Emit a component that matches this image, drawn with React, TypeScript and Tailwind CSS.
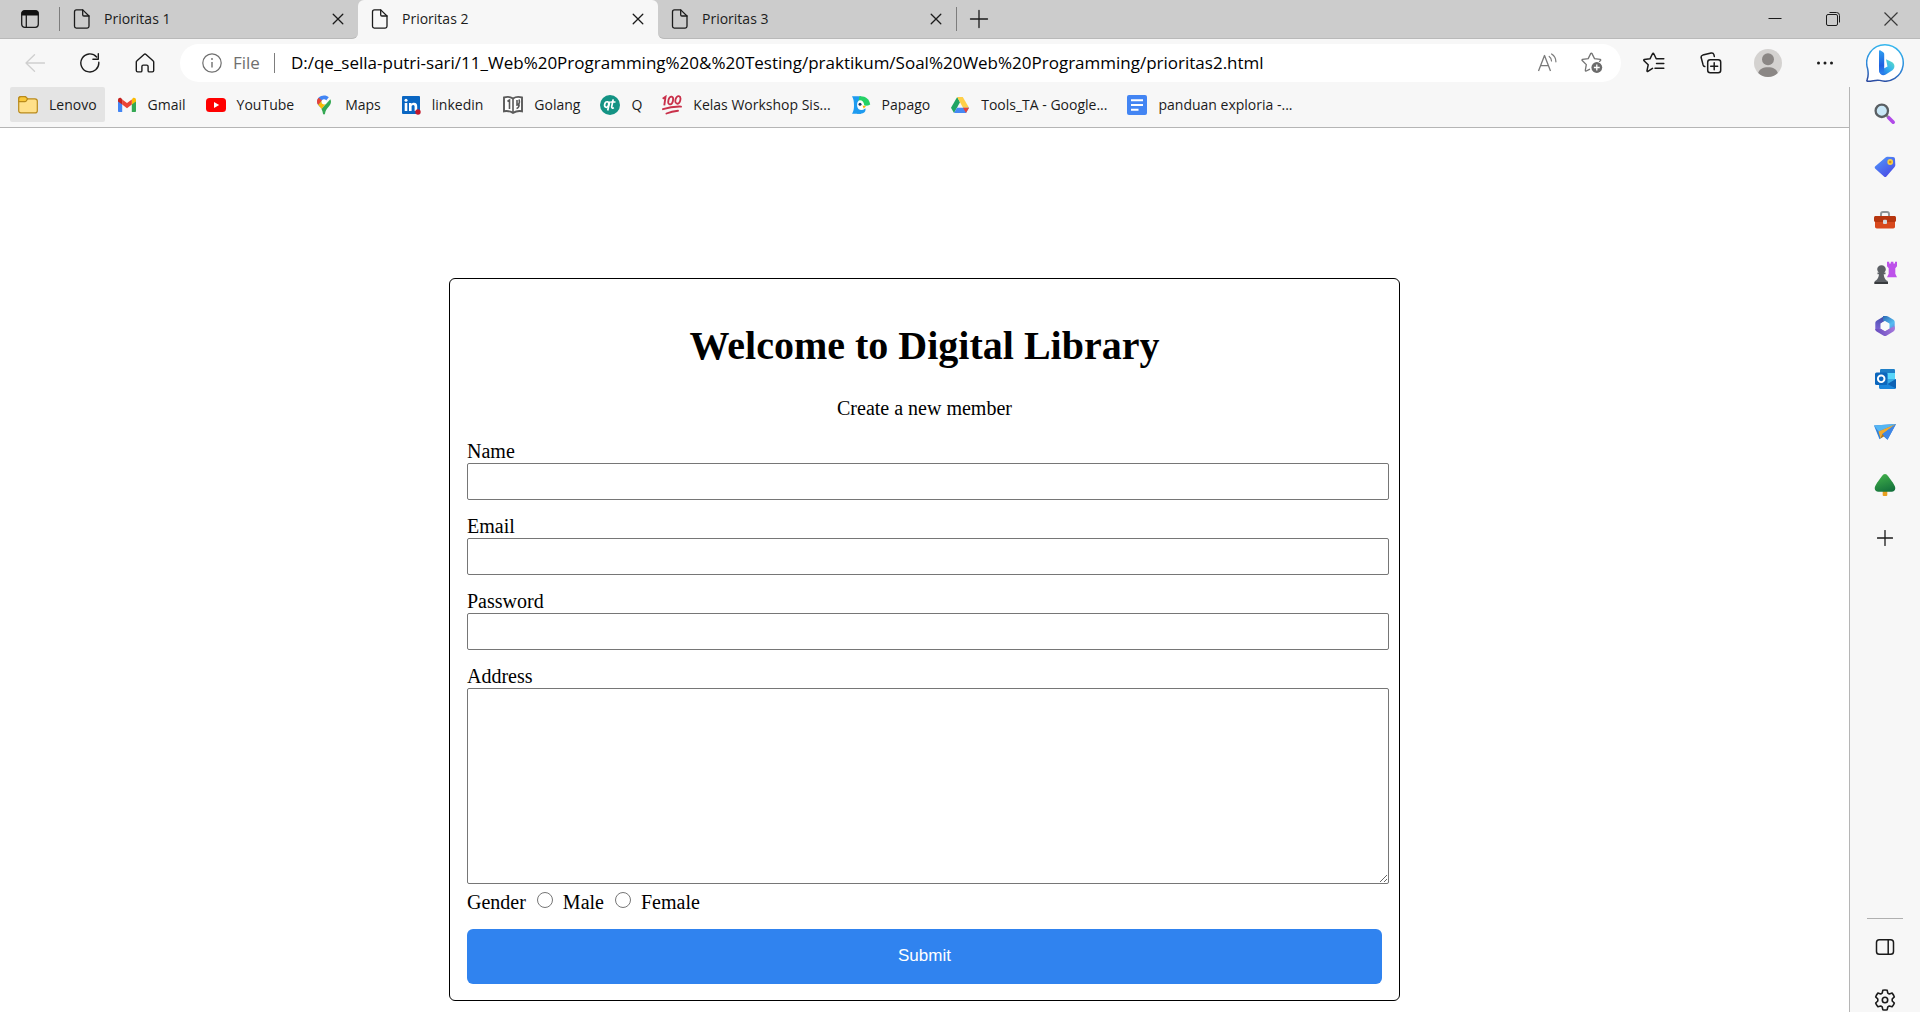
import type { ReactNode } from 'react';

type IconProps = { children: ReactNode; size?: string; box?: string };

function Icon({ children, size = 'size-5', box = '0 0 20 20' }: IconProps) {
  return (
    <svg viewBox={box} className={`${size} shrink-0`} fill="none" aria-hidden="true">
      {children}
    </svg>
  );
}

const line = { stroke: '#1b1b1b', strokeWidth: 1.3, strokeLinecap: 'round', strokeLinejoin: 'round' } as const;

/* ---------- window and toolbar icons ---------- */

const PageIcon = () => (
  <Icon>
    <path d="M4.5.9h6.2L17 7v10.3c0 1-.8 1.8-1.8 1.8H4.3c-1 0-1.8-.8-1.8-1.8V2.9c0-1.100.9-2 2-2Z" {...line} />
    <path d="M10.700 1v4.800c0 .8.500 1.200 1.200 1.200H17" {...line} />
  </Icon>
);

const CloseIcon = () => (
  <Icon size="size-3" box="0 0 12 12">
    <path d="m1.200 1.200 9.600 9.600m0-9.600-9.600 9.600" {...line} />
  </Icon>
);

const TabActionsIcon = () => (
  <Icon>
    <rect x="1.700" y="1.700" width="16.600" height="16.600" rx="3" {...line} />
    <path d="M1.500 6.500V4.500a3 3 0 0 1 3-3h11a3 3 0 0 1 3 3v2Z" fill="#111" />
    <path d="M6.300 6.500v11.800" {...line} />
  </Icon>
);

const PlusIcon = () => (
  <Icon>
    <path d="M10 1.500v17M1.500 10h17" {...line} />
  </Icon>
);

const BackIcon = () => (
  <Icon>
    <path d="M19.500 10H1m8.500-8.300L1 10l8.500 8.300" {...line} stroke="#cfcfcf" />
  </Icon>
);

const RefreshIcon = () => (
  <Icon>
    <path d="M18.800 9.200A9 9 0 1 1 16.600 4M18.300.8v5.400h-5.400" {...line} strokeWidth={1.400} />
  </Icon>
);

const HomeIcon = () => (
  <Icon>
    <path d="M9 1.500 2 7.700c-.5.400-.7.800-.7 1.400v8.400c0 .8.600 1.400 1.400 1.400h3c.7 0 1.200-.5 1.200-1.200v-4.200c0-.8.600-1.400 1.400-1.400h3.400c.8 0 1.400.6 1.400 1.400v4.200c0 .7.500 1.200 1.200 1.200h3c.8 0 1.400-.6 1.400-1.400V9.100c0-.6-.2-1-.7-1.400L11 1.500a1.500 1.500 0 0 0-2 0Z" {...line} strokeWidth={1.400} />
  </Icon>
);

const InfoIcon = () => (
  <Icon>
    <circle cx="10" cy="10" r="9.200" stroke="#6f6f6f" strokeWidth="1.200" />
    <path d="M10 9v5.500" stroke="#6f6f6f" strokeWidth="1.400" />
    <circle cx="10" cy="6" r=".9" fill="#6f6f6f" />
  </Icon>
);

const ReadAloudIcon = () => (
  <Icon>
    <path d="m1.500 18 6-15.500 6 15.500M3.700 12.700h7.600" stroke="#7a7a7a" strokeWidth="1.300" strokeLinejoin="round" />
    <path d="M12.200 3.400c1.500 1 2.300 2.700 2.300 4.600M14.600 1c2.800 1.800 4.300 4.600 4.300 7.800" stroke="#7a7a7a" strokeWidth="1.200" strokeLinecap="round" />
  </Icon>
);

const StarAddIcon = () => (
  <Icon size="size-[22px]" box="0 0 22 22">
    <path d="M8.500 17.300 5.200 19c-.5.300-1-.1-.9-.6l1-5.800L1.200 8.500c-.4-.4-.2-1 .3-1.100l5.700-.8 2.600-5.200c.2-.5.900-.5 1.100 0l2.600 5.200 5.700.8c.6.100.7.700.3 1.100l-1 .9" stroke="#747474" strokeWidth="1.300" strokeLinecap="round" />
    <circle cx="15.800" cy="15.500" r="5.400" fill="#6b6b6b" />
    <path d="M15.800 12.600v5.800m-2.900-2.900h5.800" stroke="#fff" strokeWidth="1.300" />
  </Icon>
);

const FavoritesIcon = () => (
  <Icon size="size-[22px]" box="0 0 22 22">
    <path d="m9.500 16.400-4.600 2.900c-.5.300-1-.1-.9-.6l1.200-5.900L1 8.700c-.4-.4-.2-1 .3-1.100L7 6.800l2.600-5.300c.2-.5.900-.5 1.100 0l2.500 5.200h7.600M13.500 11.500h7.300M12 16.300h8.800" {...line} strokeWidth={1.500} />
  </Icon>
);

const CollectionsIcon = () => (
  <Icon size="size-[22px]" box="0 0 22 22">
    <rect x="7.700" y="7.700" width="13" height="13" rx="2.500" {...line} strokeWidth={1.500} />
    <path d="M14.200 10.700v7m-3.500-3.500h7M4.800 14.500c-.9-.2-1.400-.7-1.700-1.600L1.200 5.800c-.3-1.300.3-2.300 1.600-2.700l8.300-2.100c1.400-.3 2.400.3 2.800 1.600l.4 1.800" {...line} strokeWidth={1.500} />
  </Icon>
);

const ProfileIcon = () => (
  <Icon size="size-7" box="0 0 28 28">
    <circle cx="14" cy="14" r="14" fill="#d4d2d0" />
    <circle cx="14" cy="10.300" r="6" fill="#8b8785" />
    <path d="M4.200 24c1-3.700 4.700-5.700 9.800-5.700s8.800 2 9.800 5.700A14 14 0 0 1 14 28a14 14 0 0 1-9.800-4Z" fill="#8b8785" />
  </Icon>
);

const DotsIcon = () => (
  <Icon>
    <circle cx="3.500" cy="10" r="1.500" fill="#1b1b1b" />
    <circle cx="10" cy="10" r="1.500" fill="#1b1b1b" />
    <circle cx="16.500" cy="10" r="1.500" fill="#1b1b1b" />
  </Icon>
);

const BingIcon = () => (
  <Icon size="size-[38px]" box="0 0 38 38">
    <defs>
      <linearGradient id="bubble" x1="19" y1="0" x2="12" y2="38" gradientUnits="userSpaceOnUse">
        <stop stopColor="#35b8ee" />
        <stop offset=".6" stopColor="#2f86d8" />
        <stop offset="1" stopColor="#2b4aa0" />
      </linearGradient>
      <linearGradient id="stem" x1="14" y1="7" x2="18" y2="31" gradientUnits="userSpaceOnUse">
        <stop stopColor="#2f9df0" />
        <stop offset=".6" stopColor="#1f5fe0" />
        <stop offset="1" stopColor="#2f8cf0" />
      </linearGradient>
      <linearGradient id="bowl" x1="28" y1="16" x2="15" y2="30" gradientUnits="userSpaceOnUse">
        <stop stopColor="#5fe0c0" />
        <stop offset=".5" stopColor="#36b4ee" />
        <stop offset="1" stopColor="#2370e6" />
      </linearGradient>
    </defs>
    <path d="M19 .8a18.200 18.200 0 1 1-5.300 35.600c-3.500-1-8 1.200-12.400.8-.7-.1-.5-.7-.3-1.100 1-2.500 1.600-7 .6-11.500A18.200 18.200 0 0 1 19 .8Z" fill="#fff" stroke="url(#bubble)" strokeWidth="1.500" />
    <path d="m20 15.300 5.800 2.800c3.200 1.700 3.600 6 .6 8.200l-6.600 4.200c-3 1.800-6.300 0-6.500-3.500l8.200-4.600Z" fill="url(#bowl)" />
    <path d="M13 7.200c0-.8.800-1.200 1.500-.8l2.400 1.500c.9.600 1.300 1.300 1.300 2.300v14c0 2.800-.2 4.500-1.600 5.300-1.800.8-3.600-.7-3.600-3Z" fill="url(#stem)" />
  </Icon>
);

/* ---------- bookmark icons ---------- */

const FolderIcon = () => (
  <Icon>
    <path d="M.7 4c0-1.300.8-2.300 2.200-2.300h3.700c.8 0 1.300.3 1.800.9l1 1.200h7.500c1.500 0 2.400 1 2.400 2.300v9.600c0 1.300-.9 2.200-2.200 2.200H2.900c-1.300 0-2.200-.9-2.200-2.200Z" fill="#ffe08a" stroke="#b98a1c" strokeWidth="1.200" />
    <path d="M.7 6.700h6.200c.6 0 1-.3 1.400-.8l1.300-2.100-1.400-1.400c-.4-.4-.9-.7-1.500-.7H3C1.600 1.700.7 2.700.7 4Z" fill="#f9c83a" stroke="#b98a1c" strokeWidth="1.200" />
  </Icon>
);

const GmailIcon = () => (
  <Icon>
    <path d="M1 5.500v10.600c0 .6.400 1 1 1h3.200V8.500Z" fill="#4285f4" />
    <path d="M19 5.500v10.600c0 .6-.4 1-1 1h-3.200V8.500Z" fill="#34a853" />
    <path d="M14.800 4.700v4.900L19 6.400V4.900c0-1.900-2-2.700-3.300-1.700Z" fill="#fbbc04" />
    <path d="M5.200 9.600V4.400L10 8l4.800-3.600v5.200L10 13.200Z" fill="#ea4335" />
    <path d="M1 4.900v1.500l4.200 3.200V4.400l-.9-1.200C3 2.200 1 3 1 4.900Z" fill="#c5221f" />
  </Icon>
);

const YouTubeIcon = () => (
  <Icon>
    <rect y="3" width="20" height="14" rx="3.500" fill="#f00" />
    <path d="m8 7 5.200 3L8 13Z" fill="#fff" />
  </Icon>
);

const MapsIcon = () => (
  <Icon>
    <path d="M10 .5c2 0 3.500.6 4.800 1.800L6.300 12.500C4.800 10.600 3 9 3 6.800 3 3.300 6.200.5 10 .5Z" fill="#4285f4" />
    <path d="M4.600 2.700 8 5.500 4.200 10C3.500 9 3 8 3 6.800c0-1.500.6-3 1.600-4.100Z" fill="#ea4335" />
    <path d="M12.100 8.700 7.500 14c-1-1.600-2.200-2.800-3.300-4L7.900 5.600c-.6 2.200.4 3.900 2.100 3.900.8 0 1.500-.3 2.100-.8Z" fill="#fbbc04" />
    <path d="M16.300 4.200c.5.900.7 1.700.7 2.600 0 4.600-5.300 6-6 12-.1 1-1.900 1-2 0-.2-1.800-.8-3.400-1.500-4.800Z" fill="#34a853" />
    <circle cx="10" cy="6.800" r="2.500" fill="#fff" />
  </Icon>
);

const LinkedinIcon = () => (
  <Icon>
    <rect x="1" y="1" width="18" height="18" rx="1" fill="#0a66c2" />
    <path d="M3.700 8h2.600v8H3.700zM8 8h2.500v1.100c.5-.8 1.300-1.300 2.500-1.300 2.300 0 3.200 1.400 3.200 3.600V16h-2.600v-4.200c0-1.100-.4-1.800-1.400-1.800s-1.600.7-1.600 1.800V16H8Z" fill="#fff" />
    <circle cx="5" cy="5.200" r="1.500" fill="#fff" />
    <circle cx="17" cy="17" r="2.700" fill="#c2182b" />
  </Icon>
);

const BookIcon = () => (
  <Icon>
    <path d="M1 2.500c3-1 6.500-.7 9 1 2.500-1.700 6-2 9-1v13.800c-3-.6-6-.2-9 1.500-3-1.700-6-2.100-9-1.500Z" fill="#fff" stroke="#5a5a5a" strokeWidth="1.900" />
    <path d="M10 3.500v14M4.500 6.500l2-1.500v9M14 5v5c2.500-.5 2.800-3 2-5.500M13.500 13.500c1.800-.3 2.500-1.700 2.700-4" stroke="#5a5a5a" strokeWidth="1.600" />
  </Icon>
);

const QtIcon = () => (
  <Icon>
    <circle cx="10" cy="10" r="10" fill="#149384" />
    <ellipse cx="6.700" cy="9.500" rx="2" ry="2.800" transform="rotate(15 6.700 9.500)" stroke="#fff" strokeWidth="1.700" />
    <path d="m9.700 6.500-2 9M13.200 4.300l-1.500 7.400c-.2 1.300.8 1.700 2.200 1.100M10.500 7h5" stroke="#fff" strokeWidth="1.700" />
  </Icon>
);

const HundredIcon = () => (
  <Icon>
    <path d="m.7 3.800 2.800-2-1.200 8.500" stroke="#c9304a" strokeWidth="1.900" />
    <ellipse cx="8.700" cy="5.500" rx="2.300" ry="3.900" transform="rotate(14 8.700 5.500)" stroke="#c9304a" strokeWidth="1.800" />
    <ellipse cx="15.900" cy="4.900" rx="2.400" ry="3.900" transform="rotate(14 15.900 4.900)" stroke="#c9304a" strokeWidth="1.800" />
    <path d="M1 14.200c6-2 12-2.800 18-2.600M4.500 18.500c3.600-1.600 7.500-2.500 11.500-2.800" stroke="#c9304a" strokeWidth="1.900" strokeLinecap="round" />
  </Icon>
);

const PapagoIcon = () => (
  <Icon>
    <path d="M1 1.300h9v17.400H1c1.500-2.200 2-4.700 2-8.200S2.500 3.500 1 1.300Z" fill="#1e9bf0" />
    <path d="M6 13c3 2 6 2 8.500.5.500 3-1.500 5.200-5 5.200H6Z" fill="#1e9bf0" />
    <path d="M8.500 1.300c5.800-.5 9.800 2.500 10.700 8.200-2.200 1.300-4.500 1.600-7 .8L7.500 6Z" fill="#25d266" />
    <path d="M9 5.300c2.300 0 3.800 1.800 4.200 4.700l-.2 4.200c-1.500 1-3.800 1-5.300 0C5.300 12.500 5.500 5.300 9 5.300Z" fill="#fff" />
    <circle cx="9" cy="9.300" r="1.500" fill="#223a5e" />
    <path d="m11.500 10.500 3.500.7-2.300 2.200Z" fill="#ffb400" />
  </Icon>
);

const DriveIcon = () => (
  <Icon>
    <path d="M7.200 2 1 12.700l3 5.300 6-10.700Z" fill="#1fa463" />
    <path d="M7.200 2h5.600L19 12.700h-6Z" fill="#ffcf48" />
    <path d="M4 18h12l3-5.300H7Z" fill="#4688f4" />
    <path d="m16 18 3-5.300h-6Z" fill="#ea4335" />
  </Icon>
);

const DocsIcon = () => (
  <Icon>
    <rect width="20" height="20" rx="2" fill="#4385f3" />
    <path d="M4 5.300h12M4 10h12M4 14.700h7.500" stroke="#fff" strokeWidth="2" />
  </Icon>
);

/* ---------- sidebar icons ---------- */

const SearchIcon = () => (
  <Icon size="size-[22px]" box="0 0 22 22">
    <path d="m14.500 14.500 4.700 4.700" stroke="#b14be8" strokeWidth="3.600" strokeLinecap="round" />
    <path d="m11.500 11.500 2.500 2.500" stroke="#8a8a8a" strokeWidth="2" />
    <circle cx="7.800" cy="7.800" r="6.200" fill="#c9e7f7" stroke="#5a5f63" strokeWidth="2.300" />
  </Icon>
);

const TagIcon = () => (
  <Icon size="size-[22px]" box="0 0 22 22">
    <defs>
      <linearGradient id="tag" x1="4" y1="3" x2="16" y2="20" gradientUnits="userSpaceOnUse">
        <stop stopColor="#4f90f8" />
        <stop offset="1" stopColor="#4a4ce6" />
      </linearGradient>
    </defs>
    <path d="M11.500 1.500c.6-.5 1-.7 1.800-.7l5.700.3c1.300 0 1.900.7 2 2l.3 6c0 .7-.2 1.300-.7 1.800l-8.200 9.500c-.7.800-1.600.8-2.400.1L1.300 12.700c-.8-.8-.8-1.600 0-2.400Z" fill="url(#tag)" />
    <circle cx="16.200" cy="6" r="2.900" fill="#f7cf45" />
    <circle cx="16.200" cy="6" r="1.300" fill="#d98e1c" />
  </Icon>
);

const ToolboxIcon = () => (
  <Icon size="size-[22px]" box="0 0 22 22">
    <path d="M7 8V5c0-1.200.8-2 2-2h4c1.200 0 2 .8 2 2v3" stroke="#8d9396" strokeWidth="1.900" />
    <rect x="1" y="10" width="20" height="9.500" rx="1.800" fill="#d8481c" />
    <path d="M0 8.500C0 7.600.7 7 1.600 7h18.800c.9 0 1.600.6 1.600 1.500v3c0 .9-.7 1.500-1.600 1.500H1.600C.7 13 0 12.400 0 11.500Z" fill="#b7360f" />
    <rect x="9" y="10.700" width="4" height="4.300" rx="1" fill="#d5dade" />
  </Icon>
);

const ChessIcon = () => (
  <Icon size="size-6" box="0 0 24 24">
    <path d="M14 .8h2.200v1.800h1.600V.8h2.600v1.800H22V.8h2v4.400l-1.700 2v5.500l1.700 3.600H14l1.700-3.600V7.200l-1.700-2Z" fill="#bd52ea" />
    <path d="M8.500 4.200c2.500 0 4.300 1.700 4.300 4 0 1.500-.7 2.600-1.800 3.300h1.500v1.700h-1.800c.2 2.700 1 4.500 2.800 6.300 1.100.3 1.500 1 1.500 2V23H1.500v-1.500c0-1 .4-1.700 1.500-2 1.800-1.800 2.800-3.600 3-6.300H4.500v-1.700H6a4 4 0 0 1-1.800-3.300c0-2.300 1.800-4 4.300-4Z" fill="#5c6065" />
    <path d="M1.500 21h13.500v2H1.500Z" fill="#383b3e" />
  </Icon>
);

const Microsoft365Icon = () => (
  <Icon size="size-[22px]" box="0 0 22 22">
    <defs>
      <linearGradient id="m365Left" x1="9" y1="1" x2="3" y2="18" gradientUnits="userSpaceOnUse">
        <stop stopColor="#3f4ba8" />
        <stop offset="1" stopColor="#8a6be0" />
      </linearGradient>
      <linearGradient id="m365Right" x1="9" y1="2" x2="20" y2="16" gradientUnits="userSpaceOnUse">
        <stop stopColor="#2f6fb8" />
        <stop offset=".6" stopColor="#55bdf2" />
        <stop offset="1" stopColor="#5f78d8" />
      </linearGradient>
      <linearGradient id="m365Base" x1="3" y1="18" x2="20" y2="13" gradientUnits="userSpaceOnUse">
        <stop stopColor="#6a4fc0" />
        <stop offset="1" stopColor="#a678dc" />
      </linearGradient>
    </defs>
    <path d="m9.500 1.500-7 4.200c-.8.500-1.200 1.200-1.200 2.100v7.500l5.400-1.800v-5L12 5.200Z" fill="url(#m365Left)" />
    <path d="M9 1h3.500c.6 0 1.100.2 1.600.5l5.400 3.200c.8.500 1.200 1.200 1.200 2.100v7.700l-5.400-1V8.700L9 5.500Z" fill="url(#m365Right)" />
    <path d="M1.300 14c0 1.200.5 1.900 1.300 2.400l6.700 4c1.200.7 2.400.7 3.500 0l6.600-4c.9-.5 1.300-1.200 1.300-2.200v-3l-5.400 2.300L11 16l-4.300-2.500Z" fill="url(#m365Base)" />
    <path d="m11 6 4.300 2.600v4.900L11 16l-4.300-2.500V8.600Z" fill="#fafafa" />
  </Icon>
);

const OutlookIcon = () => (
  <Icon size="size-[22px]" box="0 0 22 22">
    <rect x="6" y="1" width="15" height="19" rx="1.500" fill="#38a9e6" />
    <path d="M6 2.500C6 1.700 6.700 1 7.500 1h12c.8 0 1.500.7 1.500 1.500V5H6Z" fill="#1f7fc8" />
    <path d="M13.500 5H21v6h-7.500Z" fill="#58d6fa" />
    <path d="m5 12 8.500 4.500L22 11v8.500c0 .8-.7 1.500-1.500 1.500h-14c-.8 0-1.500-.7-1.500-1.500Z" fill="#1a86dc" />
    <path d="m13.500 16 8.500-5v9.500Z" fill="#0e62b4" />
    <rect x="1" y="4.500" width="12.500" height="12.500" rx="1.500" fill="#0c67bd" />
    <circle cx="7.200" cy="10.800" r="3.300" stroke="#fff" strokeWidth="1.900" />
  </Icon>
);

const DropIcon = () => (
  <Icon size="size-[22px]" box="0 0 22 22">
    <path d="M0 4.500 22 3l-8.500 15.700-4-3.500-4 3Z" fill="#2f82dd" />
    <path d="M0 4.500 22 3 4.500 10.500Z" fill="#55b6f3" />
    <path d="M22 3 4.500 10.500l2 7 2-4.500Z" fill="#f2aa2e" />
    <path d="m6.500 17.500 2-4.500 2 2Z" fill="#b87512" />
    <path d="M22 3 8.500 13l5 5.700Z" fill="#3f86e6" />
  </Icon>
);

const TreeIcon = () => (
  <Icon size="size-[22px]" box="0 0 22 22">
    <defs>
      <linearGradient id="tree" x1="8" y1="0" x2="14" y2="18" gradientUnits="userSpaceOnUse">
        <stop stopColor="#3fae49" />
        <stop offset="1" stopColor="#14713c" />
      </linearGradient>
    </defs>
    <rect x="8.700" y="15" width="4.600" height="7" rx="1" fill="#e8a020" />
    <path d="M11 0c1.300 0 2 .7 3 2l3.300 4.500c.5.800.8 1.300 1.500 2l1.800 3.200c1.700 3.300 0 6-3 6H4.400c-3 0-4.700-2.700-3-6l1.800-3.200c.7-.7 1-1.200 1.500-2L8 2c1-1.300 1.700-2 3-2Z" fill="url(#tree)" />
  </Icon>
);

const PanelIcon = () => (
  <Icon size="size-5">
    <rect x="1.500" y="2.700" width="17" height="14.600" rx="2.800" {...line} strokeWidth={1.500} />
    <path d="M13.200 2.700v14.600" {...line} strokeWidth={1.500} />
  </Icon>
);

const GearIcon = () => (
  <Icon size="size-[22px]" box="0 0 22 22">
    <path d="M8.800 1.300c1.500-.4 2.900-.4 4.400 0l.6 2.800 1.500.9 2.800-.9c1 1.100 1.800 2.400 2.200 3.800L18.200 10v2l2.100 2c-.4 1.500-1.200 2.700-2.200 3.800l-2.800-.8-1.500.9-.6 2.800c-1.500.4-2.900.4-4.400 0l-.6-2.800-1.500-.9-2.800.8A9.600 9.600 0 0 1 1.700 14l2.100-2v-2L1.700 7.900c.4-1.400 1.200-2.700 2.200-3.800l2.800.9 1.500-.9Z" {...line} strokeWidth={1.600} />
    <circle cx="11" cy="11" r="2.700" {...line} strokeWidth={1.600} />
  </Icon>
);

/* ---------- data ---------- */

const bookmarks = [
  { label: 'Lenovo', icon: <FolderIcon /> },
  { label: 'Gmail', icon: <GmailIcon /> },
  { label: 'YouTube', icon: <YouTubeIcon /> },
  { label: 'Maps', icon: <MapsIcon /> },
  { label: 'linkedin', icon: <LinkedinIcon /> },
  { label: 'Golang', icon: <BookIcon /> },
  { label: 'Q', icon: <QtIcon /> },
  { label: 'Kelas Workshop Sis...', icon: <HundredIcon /> },
  { label: 'Papago', icon: <PapagoIcon /> },
  { label: 'Tools_TA - Google...', icon: <DriveIcon /> },
  { label: 'panduan exploria -...', icon: <DocsIcon /> },
];

const sidebarApps = [
  { label: 'Search', icon: <SearchIcon /> },
  { label: 'Shopping', icon: <TagIcon /> },
  { label: 'Tools', icon: <ToolboxIcon /> },
  { label: 'Games', icon: <ChessIcon /> },
  { label: 'Microsoft 365', icon: <Microsoft365Icon /> },
  { label: 'Outlook', icon: <OutlookIcon /> },
  { label: 'Drop', icon: <DropIcon /> },
  { label: 'Tree', icon: <TreeIcon /> },
];

/* ---------- browser frame ---------- */

function Tab({ title, width = 'w-[298px]' }: { title: string; width?: string }) {
  return (
    <div className={`flex h-full items-center px-3 ${width}`}>
      <button type="button" className="flex grow items-center gap-3 text-left">
        <PageIcon />
        {title}
      </button>
      <button type="button" aria-label={`Close ${title}`} className="flex size-4 items-center justify-center">
        <CloseIcon />
      </button>
    </div>
  );
}

function TabStrip() {
  return (
    <header className="flex h-[39px] bg-[#f7f7f7] text-sm">
      <div className="flex items-center rounded-br-md border-b border-[#b9b9b9] bg-[#ccc]">
        <button type="button" aria-label="Tab actions" className="flex w-[59px] items-center justify-center">
          <TabActionsIcon />
        </button>
        <span className="h-6 w-px bg-[#7d7d7d]" />
        <Tab title="Prioritas 1" />
      </div>
      <div className="bg-linear-to-b from-[#ccc] from-50% to-[#f7f7f7] to-50%">
        <div className="h-full rounded-t-md border-b border-[#f7f7f7] bg-[#f7f7f7]">
          <Tab title="Prioritas 2" width="w-[300px]" />
        </div>
      </div>
      <div className="flex grow items-center rounded-bl-md border-b border-[#b9b9b9] bg-[#ccc]">
        <Tab title="Prioritas 3" />
        <span className="h-6 w-px bg-[#7d7d7d]" />
        <button type="button" aria-label="New tab" className="flex w-11 items-center justify-center">
          <PlusIcon />
        </button>
        <div className="ml-auto flex h-full">
          <button type="button" aria-label="Minimize" className="flex w-[58px] items-center justify-center">
            <Icon size="size-[14px]" box="0 0 14 14">
              <path d="M.5 6.500h13" stroke="#1b1b1b" />
            </Icon>
          </button>
          <button type="button" aria-label="Restore" className="flex w-[58px] items-center justify-center">
            <Icon size="size-[14px]" box="0 0 14 14">
              <rect x=".5" y="2.500" width="11" height="11" rx="1.500" stroke="#1b1b1b" />
              <path d="M3.500.5h7a3 3 0 0 1 3 3v7" stroke="#1b1b1b" />
            </Icon>
          </button>
          <button type="button" aria-label="Close" className="flex w-[58px] items-center justify-center">
            <Icon size="size-[14px]" box="0 0 14 14">
              <path d="m.5.500 13 13m0-13-13 13" stroke="#3a3a3a" strokeWidth="1.200" />
            </Icon>
          </button>
        </div>
      </div>
    </header>
  );
}

function ToolButton({ label, children }: { label: string; children: ReactNode }) {
  return (
    <button type="button" aria-label={label} className="flex h-10 w-[57px] shrink-0 items-center justify-center">
      {children}
    </button>
  );
}

function Toolbar() {
  return (
    <div className="flex h-12 items-center bg-[#f7f7f7] pl-[7px]">
      <nav className="flex" aria-label="Navigation">
        <button type="button" aria-label="Back" className="flex w-[55px] items-center justify-center">
          <BackIcon />
        </button>
        <button type="button" aria-label="Refresh" className="flex w-[55px] items-center justify-center">
          <RefreshIcon />
        </button>
        <button type="button" aria-label="Home" className="flex w-[55px] items-center justify-center">
          <HomeIcon />
        </button>
      </nav>
      <div className="mr-1 ml-2 flex h-[38px] grow items-center rounded-full bg-white pr-[18px] pl-[22px] text-[17px]">
        <InfoIcon />
        <span className="pl-[11px] text-[#6f6f6f]">File</span>
        <span className="mr-4 ml-[14px] h-5 w-px bg-[#7d7d7d]" />
        <input
          type="text"
          aria-label="Address"
          className="min-w-0 grow text-black outline-none"
          defaultValue="D:/qe_sella-putri-sari/11_Web%20Programming%20&%20Testing/praktikum/Soal%20Web%20Programming/prioritas2.html"
        />
        <div className="flex items-center gap-6">
          <button type="button" aria-label="Read aloud">
            <ReadAloudIcon />
          </button>
          <button type="button" aria-label="Add to favorites">
            <StarAddIcon />
          </button>
        </div>
      </div>
      <ToolButton label="Favorites"><FavoritesIcon /></ToolButton>
      <ToolButton label="Collections"><CollectionsIcon /></ToolButton>
      <ToolButton label="Profile"><ProfileIcon /></ToolButton>
      <ToolButton label="Settings and more"><DotsIcon /></ToolButton>
      <button type="button" aria-label="Bing" className="flex w-[67px] shrink-0 items-center justify-center pr-1">
        <BingIcon />
      </button>
    </div>
  );
}

function BookmarksBar() {
  return (
    <nav aria-label="Bookmarks" className="flex h-[41px] items-start gap-1 border-b border-[#b5b5b5] bg-[#f7f7f7] pl-[10px] text-sm">
      {bookmarks.map(({ label, icon }, index) => (
        <a
          key={label}
          href="#"
          className={`flex h-[35px] items-center gap-[11px] rounded-xs px-2 whitespace-nowrap ${index === 0 ? 'bg-[#e4e4e4]' : ''}`}
        >
          {icon}
          {label}
        </a>
      ))}
    </nav>
  );
}

function Sidebar() {
  return (
    <aside className="flex w-[71px] shrink-0 flex-col items-center border-l border-[#b5b5b5] bg-[#f7f7f7]">
      {sidebarApps.map(({ label, icon }) => (
        <button key={label} type="button" aria-label={label} className="flex h-[53px] w-full items-center justify-center">
          {icon}
        </button>
      ))}
      <button type="button" aria-label="Customize" className="flex h-[53px] w-full items-center justify-center">
        <Icon size="size-4" box="0 0 16 16">
          <path d="M8 .5v15M.5 8h15" {...line} />
        </Icon>
      </button>
      <span className="mt-auto mb-[18px] h-px w-9 bg-[#b0b0b0]" />
      <button type="button" aria-label="Hide sidebar" className="mb-8">
        <PanelIcon />
      </button>
      <button type="button" aria-label="Settings" className="pb-px">
        <GearIcon />
      </button>
    </aside>
  );
}

/* ---------- page ---------- */

const fieldClass = 'block w-[calc(100%+7px)] rounded-xs border border-[#767676] bg-white px-2 outline-none';

function Field({ id, label, type }: { id: string; label: string; type: string }) {
  return (
    <div className="mb-[15px]">
      <label htmlFor={id} className="block">{label}</label>
      <input id={id} type={type} className={`${fieldClass} h-[37px]`} />
    </div>
  );
}

function Radio({ id, label }: { id: string; label: string }) {
  return (
    <>
      <input
        id={id}
        type="radio"
        name="gender"
        className="mr-[10px] mb-[5px] ml-[11px] size-4 appearance-none rounded-full border border-[#767676] bg-white checked:border-4"
      />
      <label htmlFor={id}>{label}</label>
    </>
  );
}

function MemberForm() {
  return (
    <form className="mx-auto w-full max-w-[951px] rounded-md border border-black px-[17px] py-4 text-[20px] leading-[23px]">
      <h1 className="mt-7 text-center text-[40px] leading-[46px] font-bold">Welcome to Digital Library</h1>
      <p className="mt-7 mb-5 text-center">Create a new member</p>
      <Field id="name" label="Name" type="text" />
      <Field id="email" label="Email" type="email" />
      <Field id="password" label="Password" type="password" />
      <label htmlFor="address" className="block">Address</label>
      <textarea id="address" className={`${fieldClass} h-[196px] resize`} />
      <div className="flex items-center pt-[7px]">
        <span>Gender</span>
        <Radio id="male" label="Male" />
        <Radio id="female" label="Female" />
      </div>
      <button
        type="submit"
        className="mt-[15px] block h-[55px] w-full rounded-md bg-[#3083ef] pb-[3px] font-['Liberation_Sans',Arial,sans-serif] text-[17px] text-white"
      >
        Submit
      </button>
    </form>
  );
}

export default function App() {
  return (
    <div className="flex min-h-screen flex-col bg-white font-['Open_Sans',sans-serif] text-[#1b1b1b]">
      <TabStrip />
      <Toolbar />
      <div className="flex grow">
        <div className="flex min-w-0 grow flex-col">
          <BookmarksBar />
          <main className="grow pt-[150px] font-['Liberation_Serif','Times_New_Roman',serif] text-black">
            <MemberForm />
          </main>
        </div>
        <Sidebar />
      </div>
    </div>
  );
}
